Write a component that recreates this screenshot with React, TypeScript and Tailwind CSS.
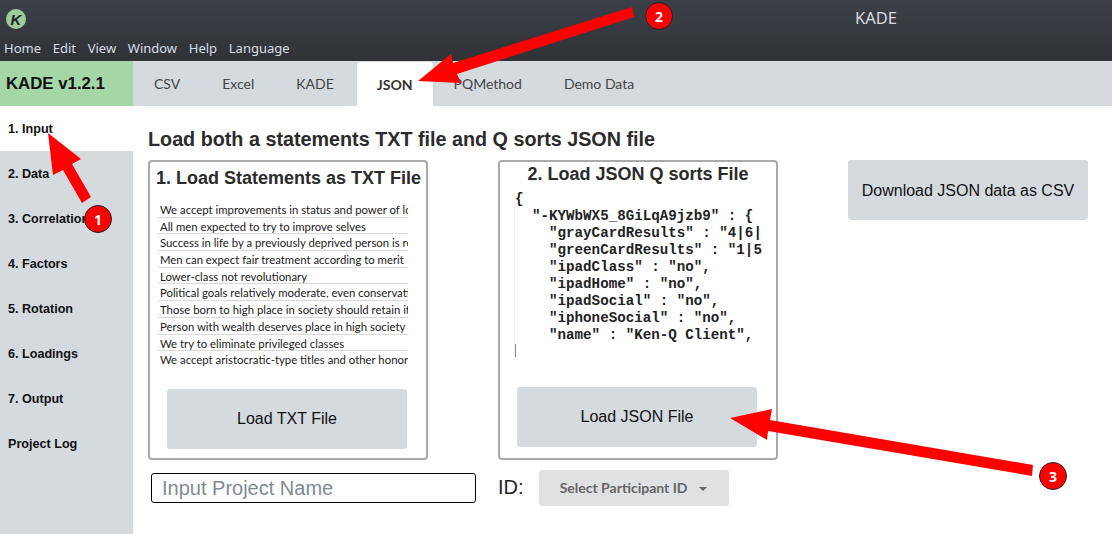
const MENU = ['Home', 'Edit', 'View', 'Window', 'Help', 'Language'];
const TABS = ['CSV', 'Excel', 'KADE', 'JSON', 'PQMethod', 'Demo Data'];
const NAV = ['1. Input', '2. Data', '3. Correlations', '4. Factors', '5. Rotation', '6. Loadings', '7. Output', 'Project Log'];
const STATEMENTS = [
  'We accept improvements in status and power of lower classes',
  'All men expected to try to improve selves',
  'Success in life by a previously deprived person is respected',
  'Men can expect fair treatment according to merit',
  'Lower-class not revolutionary',
  'Political goals relatively moderate, even conservative in nature',
  'Those born to high place in society should retain it always',
  'Person with wealth deserves place in high society',
  'We try to eliminate privileged classes',
  'We accept aristocratic-type titles and other honors',
];
const JSON_LINES = [
  '{',
  '  "-KYWbWX5_8GiLqA9jzb9" : {',
  '    "grayCardResults" : "4|6|',
  '    "greenCardResults" : "1|5',
  '    "ipadClass" : "no",',
  '    "ipadHome" : "no",',
  '    "ipadSocial" : "no",',
  '    "iphoneSocial" : "no",',
  '    "name" : "Ken-Q Client",',
];

function Badge({ n, className }: { n: number; className: string }) {
  return (
    <div
      className={`absolute flex h-[28px] w-[28px] items-center justify-center rounded-full border border-[#222] bg-[#ff0000] font-['Open_Sans',sans-serif] text-[14px] font-bold text-white ${className}`}
    >
      {n}
    </div>
  );
}

function Arrows() {
  return (
    <svg className="pointer-events-none absolute left-0 top-0" width="1112" height="534">
      <polygon fill="#ff0000" points="48,133 81,159 72,164 91,197 82,203 63,170 53,175" />
      <polygon fill="#ff0000" points="418,81 451,54 453,63 632,7 634,17 457,74 461,83" />
      <polygon fill="#ff0000" points="730,418 772,409 770,420 1033,465 1032,476 768,431 767,440" />
    </svg>
  );
}

export default function App() {
  return (
    <div className="relative flex h-[534px] w-[1112px] flex-col overflow-hidden bg-white font-['Liberation_Sans',sans-serif]">
      {/* title bar */}
      <div className="flex h-[61px] shrink-0 flex-col bg-gradient-to-b from-[#3c4049] to-[#2f3336] pl-[4px]">
        <div className="relative flex h-[38px] items-center pl-[2px]">
          <div className="flex h-[20px] w-[20px] items-center justify-center rounded-full bg-[#9ccc9c] text-[15px] font-bold italic leading-none text-[#20242a]">
            K
          </div>
          <span className="absolute left-[851px] top-[6px] font-['Noto_Sans',sans-serif] text-[16.5px] text-[#d8dade]">KADE</span>
        </div>
        <div className="flex gap-[11.7px] font-['Noto_Sans',sans-serif] text-[13px] leading-[20px] text-[#d8dee6]">
          {MENU.map((m) => (
            <span key={m}>{m}</span>
          ))}
        </div>
      </div>

      {/* tab row */}
      <div className="flex h-[45px] shrink-0 bg-[#d5dadf]">
        <div className="flex w-[133px] items-center bg-[#a5d6a7] pl-[6px] text-[16.8px] font-bold text-[#111]">KADE v1.2.1</div>
        <div className="flex pl-[1px] font-['Lato',sans-serif] text-[14px] text-[#444]">
          {TABS.map((t) => (
            <div
              key={t}
              className={
                t === 'JSON'
                  ? 'ml-[1px] mr-[1px] mt-[1px] flex items-center rounded-t-[3px] bg-white px-[20px] font-bold text-[#333]'
                  : 'mr-[2px] flex items-center px-[20px]'
              }
            >
              {t}
            </div>
          ))}
        </div>
      </div>

      <div className="flex flex-1">
        {/* sidebar */}
        <div className="w-[133px] shrink-0 bg-[#d5dadf]">
          {NAV.map((n, i) => (
            <div
              key={n}
              className={`flex h-[45px] items-center overflow-hidden whitespace-nowrap pl-[8px] pt-[2px] text-[12.6px] font-bold text-[#111] ${i === 0 ? 'bg-white' : ''}`}
            >
              {n}
            </div>
          ))}
        </div>

        {/* main */}
        <div className="flex-1 pl-[15px]">
          <h2 className="mt-[21px] h-[33px] text-[19.75px] font-bold leading-[24px] text-[#2b2b2b]">
            Load both a statements TXT file and Q sorts JSON file
          </h2>
          <div className="flex items-start">
            <div className="flex h-[300px] w-[280px] flex-col rounded-[4px] border-2 border-[#aaaaaa] px-[8px]">
              <div className="ml-[-2px] whitespace-nowrap pt-[4px] text-[18px] font-bold leading-[24px] text-[#2b2b2b]">
                1. Load Statements as TXT File
              </div>
              <div className="mt-[11px] w-[250px] overflow-hidden">
                {STATEMENTS.map((s, i) => (
                  <div
                    key={s}
                    className={`h-[16.7px] overflow-hidden whitespace-nowrap pl-[2px] font-['Lato',sans-serif] text-[11.35px] leading-[18px] text-[#1a1a1a] ${i < 9 ? 'border-b border-[#d8d8d8]' : ''}`}
                  >
                    {s}
                  </div>
                ))}
              </div>
              <button className="ml-[9px] mt-[21px] h-[60px] w-[240px] rounded-[3px] bg-[#d5dadf] text-[16px] text-[#111]">
                Load TXT File
              </button>
            </div>

            <div className="ml-[70px] flex h-[300px] w-[280px] flex-col items-center rounded-[4px] border-2 border-[#aaaaaa]">
              <div className="text-[18px] font-bold leading-[24px] text-[#2b2b2b]">2. Load JSON Q sorts File</div>
              <div className="ml-[14px] mt-[4.5px] h-[168px] w-[250px] self-start overflow-hidden border-l border-[#f0f0f0] font-['Liberation_Mono',monospace] text-[14.2px] font-bold leading-[17.1px] text-[#222]">
                {JSON_LINES.map((l, i) => (
                  <div key={i} className="h-[17.1px] whitespace-pre">
                    {l}
                  </div>
                ))}
                <div className="h-[13px] w-[1px] bg-[#888]" />
              </div>
              <button className="ml-[17px] mt-[28.5px] h-[60px] w-[240px] self-start rounded-[3px] bg-[#d5dadf] text-[16px] text-[#111]">
                Load JSON File
              </button>
            </div>

            <button className="ml-[70px] h-[60px] w-[240px] rounded-[3px] bg-[#d5dadf] pt-[2px] text-[16px] text-[#111]">
              Download JSON data as CSV
            </button>
          </div>

          <div className="mt-[10px] flex items-start">
            <input
              placeholder="Input Project Name"
              className="ml-[3px] mt-[3px] h-[30px] w-[325px] rounded-[3px] border border-black px-[10px] text-[20px] text-[#111] outline-none placeholder:text-[#808a94]"
            />
            <span className="ml-[22px] mt-[3px] text-[20px] leading-[28px] text-[#222]">ID:</span>
            <button className="ml-[15px] flex h-[36px] w-[190px] items-center justify-center rounded-[3px] bg-[#dfe1e3] pb-[2px] font-['Lato',sans-serif] text-[14px] font-bold text-[#666]">
              Select Participant ID
              <span className="ml-[12px] mt-[3px] h-0 w-0 border-x-[4px] border-t-[4px] border-x-transparent border-t-[#666]" />
            </button>
          </div>
        </div>
      </div>

      <Arrows />
      <Badge n={1} className="left-[84px] top-[205px]" />
      <Badge n={2} className="left-[645px] top-[2px]" />
      <Badge n={3} className="left-[1039px] top-[462px]" />
    </div>
  );
}
